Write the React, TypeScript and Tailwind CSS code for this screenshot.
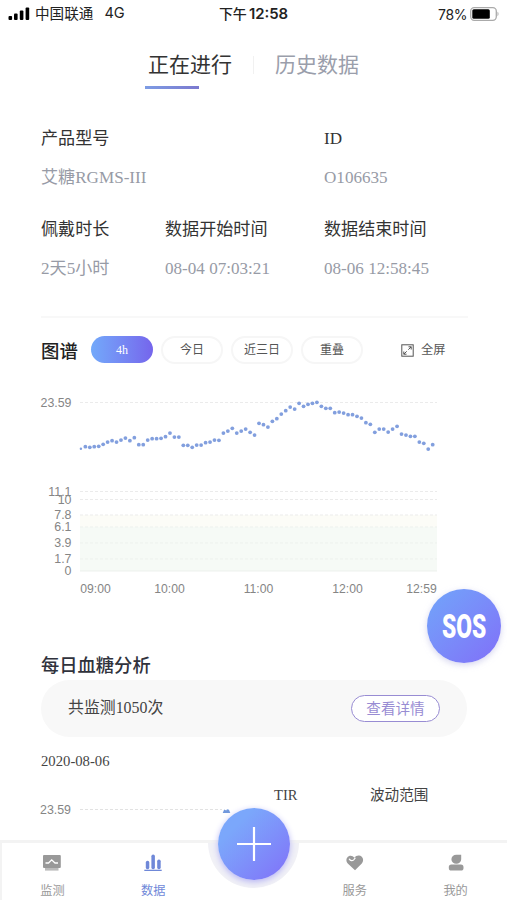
import React from "react";

const readings = [
    417, 411, 413, 411, 410, 404, 397, 393, 397, 391, 385, 393, 384, 405, 405, 391, 387, 387, 386, 381,
    370, 382, 382, 407, 407, 413, 406, 406, 399, 397, 391, 392, 370, 364, 356, 370, 364, 358, 368, 376,
    341, 345, 352, 335, 327, 313, 303, 292, 298, 281, 290, 284, 281, 278, 290, 296, 296, 309, 307, 310,
    315, 315, 320, 325, 339, 344, 368, 358, 358, 367, 358, 350, 373, 376, 380, 380, 397, 401, 418, 405,
];

const yTicks = [
    { label: "23.59", y: 12.5 },
    { label: "11.1", y: 101.5 },
    { label: "10", y: 109.5 },
    { label: "7.8", y: 125 },
    { label: "6.1", y: 137 },
    { label: "3.9", y: 153 },
    { label: "1.7", y: 169 },
    { label: "0", y: 181 },
];

const xTicks = [
    { label: "09:00", x: 95.5 },
    { label: "10:00", x: 169.5 },
    { label: "11:00", x: 258.5 },
    { label: "12:00", x: 347.5 },
    { label: "12:59", x: 421.5 },
];

const ranges = ["今日", "近三日", "重叠"];

const StatusBar = () => (
    <header className="grid h-[28px] grid-cols-3 items-center px-[8px] font-[Inter,'Noto_Sans_CJK_SC',sans-serif] text-[14px] text-[#222]">
        <div className="flex items-center">
            <svg width="22" height="14" viewBox="0 0 22 14" fill="#000">
                <rect x="0.5" y="9" width="3.6" height="4" rx="1" />
                <rect x="6" y="6.5" width="3.6" height="6.5" rx="1" />
                <rect x="11.8" y="3.5" width="3.6" height="9.5" rx="1" />
                <rect x="17.6" y="0.5" width="3.6" height="12.5" rx="1" />
            </svg>
            <span className="ml-[5px] pt-px text-[14.6px]">中国联通</span>
            <span className="ml-[11px] text-[14.6px]">4G</span>
        </div>
        <div className="whitespace-nowrap text-center font-semibold">
            <span className="font-medium">下午</span>
            <span className="ml-[2px] text-[14.9px]">12:58</span>
        </div>
        <div className="flex items-center justify-end">
            <span className="text-[14px] tracking-[-0.4px]">78%</span>
            <svg className="-mt-px ml-[3px]" width="29" height="14" viewBox="0 0 29 14">
                <rect x="0.7" y="0.7" width="25.6" height="12.6" rx="3.5" fill="none" stroke="#aaa" strokeWidth="1.3" />
                <rect x="2.3" y="2.3" width="17.5" height="9.4" rx="1.5" fill="#000" />
                <path d="M27.5 4.8v4.4c1.4-.6 1.4-3.8 0-4.4z" fill="#aaa" />
            </svg>
        </div>
    </header>
);

const Field = ({ label, value }: { label: string; value: string }) => (
    <div className="whitespace-nowrap text-[17.1px]">
        <div className="h-[39px] leading-[24px] text-[#333]">{label}</div>
        <div className="leading-[24px] text-[#979ba6]">{value}</div>
    </div>
);

const GlucoseChart = () => (
    <svg className="mt-[26px] block shrink-0" width="507" height="210" viewBox="0 0 507 210" fontFamily="'Liberation Sans', sans-serif" fontSize="12" fill="#858585">
        <rect x="80" y="125" width="357" height="12" fill="#fcfcf7" />
        <rect x="80" y="137" width="357" height="44" fill="#f6faf6" />
        {yTicks.map((tick) => (
            <g key={tick.label}>
                <line
                    x1="80"
                    x2="437"
                    y1={tick.y}
                    y2={tick.y}
                    stroke={tick.y > 130 ? "#edf1ed" : "#ebebeb"}
                    strokeDasharray={tick.label === "0" ? undefined : "3 2"}
                />
                <text x="71.5" y={tick.y + 4} textAnchor="end" fontSize="12.4">{tick.label}</text>
            </g>
        ))}
        {xTicks.map((tick) => (
            <text key={tick.label} x={tick.x} y="202.5" textAnchor="middle" fontSize="12.2">{tick.label}</text>
        ))}
        <g fill="#829fde">
            {readings.map((value, i) => (
                <circle key={i} cx={80.9 + i * 4.453} cy={value / 3 - 80.3} r={i === 0 ? 1.2 : 1.9} />
            ))}
        </g>
    </svg>
);

const MonitorIcon = () => (
    <svg width="20" height="18" viewBox="0 0 20 18">
        <rect x="1" y="1" width="17.8" height="13" rx="1" fill="#999" />
        <path d="M3.5 9h3l3.2-3.2L13 9h3" fill="none" stroke="#fff" strokeWidth="1.3" />
        <rect x="3" y="14" width="13.5" height="2.6" fill="#bbb" />
    </svg>
);

const BarsIcon = () => (
    <svg width="20" height="18" viewBox="0 0 20 18" fill="#6f88d8">
        <rect x="2.8" y="6.7" width="3.5" height="8.5" rx="1.7" />
        <rect x="8.4" y="0.5" width="3.5" height="14.7" rx="1.7" />
        <rect x="14.2" y="5.5" width="3.5" height="9.7" rx="1.7" />
        <rect x="1.3" y="15.7" width="17.4" height="1.3" />
    </svg>
);

const HeartIcon = () => (
    <svg width="20" height="18" viewBox="0 0 20 18">
        <path d="M10 16.2 3 9.8C.6 7.2 1 3.6 3.8 2.2c2-.9 4.2-.3 5.6 1.6C10.6 2 12.4 1.3 14 1.5c4 .4 5.4 5 2.8 8z" fill="#999" />
        <path d="M4.3 5.2c1.2 1.8 3 2 4.4.6l1.4-1.6" fill="none" stroke="#fff" strokeWidth="1.2" strokeLinecap="round" />
    </svg>
);

const UserIcon = () => (
    <svg width="20" height="18" viewBox="0 0 20 18" fill="#999">
        <path d="M10.3.8h4.9v4.5a4.9 4.5 0 1 1-4.9-4.5z" />
        <rect x="2.8" y="10.6" width="14.7" height="6" rx="2.6" />
    </svg>
);

const NavItem = ({ label, icon, active }: { label: string; icon: React.ReactNode; active?: boolean }) => (
    <div className={`flex flex-col items-center pt-[11px] text-[12.2px] ${active ? "text-[#6f88d8]" : "text-[#999]"}`}>
        {icon}
        <span className="mt-[10px] leading-[18px]">{label}</span>
    </div>
);

export default function App() {
    return (
        <div className="relative flex h-[900px] w-[507px] flex-col overflow-hidden bg-white font-['Liberation_Serif','Noto_Sans_CJK_SC',serif]">
            <StatusBar />

            <div className="flex h-[62px] pt-[21px] text-[21px] leading-[32px]">
                <div className="ml-[145px] w-[108px] text-[#333]">
                    <span className="ml-[3px]">正在进行</span>
                    <div className="mt-[5px] h-[3px] w-[54px] bg-gradient-to-r from-[#7d9ce4] to-[#7b79cf]" />
                </div>
                <div className="mt-[7px] h-[18px] w-px bg-[#f1f1f1]" />
                <div className="ml-[21px] text-[#9a9eab]">历史数据</div>
            </div>

            <section className="ml-[41px] mr-[39px] grid h-[228px] grid-cols-[124px_159px_auto] grid-rows-[91px_auto] border-b-2 border-[#f8f8f8] pt-[37px]">
                <div className="col-span-2">
                    <Field label="产品型号" value="艾糖RGMS-III" />
                </div>
                <Field label="ID" value="O106635" />
                <Field label="佩戴时长" value="2天5小时" />
                <Field label="数据开始时间" value="08-04 07:03:21" />
                <Field label="数据结束时间" value="08-06 12:58:45" />
            </section>

            <div className="mt-[18px] flex h-[28px] items-center pl-[41px] text-[12px] text-[#555]">
                <h2 className="w-[50px] pt-[3px] text-[18.4px] font-medium leading-[28px] text-[#222]">图谱</h2>
                <div className="flex gap-[8px]">
                    <button className="h-[27px] w-[62px] rounded-full bg-gradient-to-r from-[#72a9fa] to-[#7565ec] text-[12px] text-white">4h</button>
                    {ranges.map((range) => (
                        <button key={range} className="h-[28px] w-[62px] rounded-full border-2 border-[#f6f6f6] text-[12px]">
                            {range}
                        </button>
                    ))}
                </div>
                <svg className="ml-[38px]" width="13" height="13" viewBox="0 0 13 13" fill="none" stroke="#555" strokeWidth="1">
                    <rect x="0.8" y="0.8" width="11.4" height="11.4" />
                    <path d="M7.5 2.8h2.7v2.7M10.2 2.8 7.3 5.7M2.8 7.5v2.7h2.7M2.8 10.2l2.9-2.9" />
                </svg>
                <span className="ml-[7px] text-[12.2px]">全屏</span>
            </div>

            <GlucoseChart />

            <h2 className="mt-[51px] h-[29px] pl-[41px] text-[18.3px] font-medium leading-[30px] text-[#30323c]">每日血糖分析</h2>
            <div className="ml-[41px] flex h-[57px] w-[426px] items-center justify-between rounded-full bg-[#f8f8f8] pl-[27px] pr-[27px]">
                <span className="-mt-px text-[15.9px] text-[#444]">共监测1050次</span>
                <button className="h-[27px] w-[89px] rounded-full border-[1.5px] border-[#988cd3] bg-white pt-px text-[14.6px] leading-[25px] text-[#988cd3]">
                    查看详情
                </button>
            </div>
            <div className="mt-[13px] pl-[41px] text-[14.7px] leading-[22px] text-[#444]">2020-08-06</div>
            <div className="mt-[12px] flex h-[22px] pl-[274px] text-[14.6px] leading-[22px] text-[#444]">
                <span className="w-[96px]">TIR</span>
                <span>波动范围</span>
            </div>
            <svg className="block shrink-0 overflow-visible" width="507" height="36" viewBox="0 0 507 36">
                <text x="71" y="8" textAnchor="end" fontFamily="'Liberation Sans', sans-serif" fontSize="12.4" fill="#858585">23.59</text>
                <path d="M80 3.5h142" stroke="#e2e2e2" strokeDasharray="3 2" />
                <path d="m222.7 7 1.5-3.4 2 .8.8-1.2 2 .6 1.3 3.2z" fill="#7198dc" />
            </svg>

            <div className="absolute left-[427px] top-[589px] flex size-[74px] items-center justify-center rounded-full bg-gradient-to-br from-[#70a5fa] to-[#806ff8] shadow-[0_2px_6px_#b9b9e599]">
                <span className="scale-x-[0.67] font-[Roboto,sans-serif] text-[34px] font-black leading-none text-white">SOS</span>
            </div>

            <nav className="absolute inset-x-0 bottom-0 h-[60px]">
                <div className="absolute left-[208px] top-[-43px] size-[91px] rounded-full bg-[#f1f1f6] [clip-path:inset(43px_0_0_0)]" />
                <div className="absolute inset-0 grid grid-cols-5 border-l-2 border-t-[3px] border-[#f3f3f3] pr-px">
                    <NavItem label="监测" icon={<MonitorIcon />} />
                    <NavItem label="数据" icon={<BarsIcon />} active />
                    <div />
                    <NavItem label="服务" icon={<HeartIcon />} />
                    <NavItem label="我的" icon={<UserIcon />} />
                </div>
                <button className="absolute left-[217.5px] top-[-32px] flex size-[72px] items-center justify-center rounded-full bg-gradient-to-br from-[#7ba7fb] from-25% to-[#806ff8] shadow-[0_2px_6px_#b6b4f4]">
                    <svg width="36" height="36" viewBox="0 0 36 36" stroke="#fff" strokeWidth="2.2">
                        <path d="M18 1v34M1 18h34" />
                    </svg>
                </button>
            </nav>
        </div>
    );
}
